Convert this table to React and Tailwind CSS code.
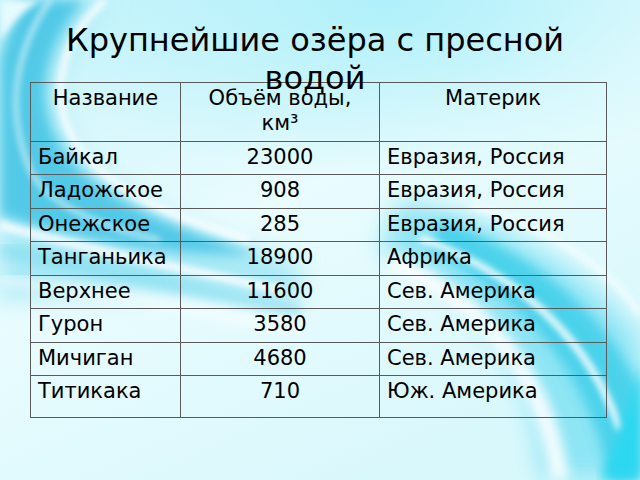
import React from "react";

const rows = [
  ["Байкал", "23000", "Евразия, Россия"],
  ["Ладожское", "908", "Евразия, Россия"],
  ["Онежское", "285", "Евразия, Россия"],
  ["Танганьика", "18900", "Африка"],
  ["Верхнее", "11600", "Сев. Америка"],
  ["Гурон", "3580", "Сев. Америка"],
  ["Мичиган", "4680", "Сев. Америка"],
  ["Титикака", "710", "Юж. Америка"],
];
const heights = ["h-[33px]", "h-[34px]", "h-[33px]", "h-[34px]", "h-[33px]", "h-[34px]", "h-[33px]", "h-[41px]"];

function Background() {
  return (
    <svg className="absolute inset-0" width="640" height="480" viewBox="0 0 640 480">
      <defs>
        <linearGradient id="base" x1="0" y1="0" x2="0.6" y2="1">
          <stop offset="0" stopColor="#c6f3fb" />
          <stop offset="0.5" stopColor="#e9fcfe" />
          <stop offset="1" stopColor="#d9f8fc" />
        </linearGradient>
        <radialGradient id="topglow" cx="0.6" cy="0" r="0.6">
          <stop offset="0" stopColor="#b0f0fa" />
          <stop offset="1" stopColor="#b0f0fa" stopOpacity="0" />
        </radialGradient>
        <filter id="b3"><feGaussianBlur stdDeviation="3" /></filter>
        <filter id="b6"><feGaussianBlur stdDeviation="6" /></filter>
        <filter id="b12"><feGaussianBlur stdDeviation="12" /></filter>
      </defs>
      <rect width="640" height="480" fill="url(#base)" />
      <rect width="640" height="300" fill="url(#topglow)" />
      {/* left swirl */}
      <path d="M0 0 L 110 0 C 50 50, 40 120, 90 165 C 140 210, 220 240, 300 265 L 300 300 C 200 290, 80 290, 0 300 Z" fill="#a8e9f6" filter="url(#b12)" />
      <path d="M20 0 L 85 0 C 40 50, 30 110, 70 160 C 110 205, 180 230, 260 255 C 170 255, 80 240, 0 215 L 0 60 Z" fill="#48c6e6" filter="url(#b6)" opacity="0.9" />
      <path d="M0 40 C 15 20, 25 10, 40 0 L 0 0 Z" fill="#e6fbfe" filter="url(#b3)" />
      <path d="M105 0 C 55 45, 45 110, 85 155 C 120 195, 180 220, 250 240" stroke="#ffffff" strokeWidth="7" fill="none" filter="url(#b3)" opacity="0.85" />
      <path d="M50 0 C 15 50, 5 110, 30 170 C 45 200, 90 225, 160 240" stroke="#ffffff" strokeWidth="5" fill="none" filter="url(#b3)" opacity="0.6" />
      <path d="M0 225 C 70 245, 160 265, 280 290" stroke="#ffffff" strokeWidth="9" fill="none" filter="url(#b3)" opacity="0.85" />
      <path d="M0 250 C 80 265, 170 285, 300 310" stroke="#7fdcf0" strokeWidth="12" fill="none" filter="url(#b6)" opacity="0.7" />
      <path d="M0 280 C 90 290, 180 305, 300 330" stroke="#ffffff" strokeWidth="10" fill="none" filter="url(#b6)" opacity="0.7" />
      {/* right swirl */}
      <path d="M400 200 C 510 220, 600 280, 640 340 L 640 480 L 540 480 C 540 390, 490 300, 380 250 Z" fill="#86e3f4" filter="url(#b12)" opacity="0.9" />
      <path d="M440 220 C 540 255, 610 320, 640 390 L 640 480 L 610 480 C 590 380, 530 300, 430 250 Z" fill="#3fcfea" filter="url(#b6)" opacity="0.85" />
      <path d="M420 238 C 520 275, 590 340, 620 430" stroke="#ffffff" strokeWidth="7" fill="none" filter="url(#b3)" opacity="0.9" />
      <path d="M390 262 C 480 300, 545 370, 560 480" stroke="#ffffff" strokeWidth="18" fill="none" filter="url(#b6)" opacity="0.9" />
      <path d="M470 205 C 560 230, 620 280, 640 315" stroke="#ffffff" strokeWidth="5" fill="none" filter="url(#b3)" opacity="0.8" />
      <path d="M640 360 C 630 400, 620 440, 600 480 L 640 480 Z" fill="#2ad8f0" filter="url(#b6)" />
    </svg>
  );
}

export default function App() {
  return (
    <div className="relative w-[640px] h-[480px] overflow-hidden" style={{ fontFamily: '"DejaVu Sans", sans-serif' }}>
      <Background />
      <div className="relative flex flex-col pt-[21px]">
        <div className="h-[61px] flex justify-center">
          <h1 className="w-[530px] ml-[-10px] text-center text-[32px] leading-[38px] font-normal text-black relative z-10">
            Крупнейшие озёра с пресной водой
          </h1>
        </div>
        <div className="ml-[30px] w-[577px] border border-[#5a5a5a] text-[21px] leading-[25px] text-black">
          <div className="grid grid-cols-[150px_199px_1fr] h-[59px] border-b border-[#5a5a5a]">
            <div className="border-r border-[#5a5a5a] text-center pt-[3px]">Название</div>
            <div className="border-r border-[#5a5a5a] text-center pt-[3px]">Объём воды,<br />км³</div>
            <div className="text-center pt-[3px]">Материк</div>
          </div>
          {rows.map((r, i) => (
            <div
              key={r[0]}
              className={`grid grid-cols-[150px_199px_1fr] ${heights[i]} ${i < rows.length - 1 ? "border-b border-[#5a5a5a]" : ""}`}
            >
              <div className="border-r border-[#5a5a5a] pl-[7px] pt-[3px]">{r[0]}</div>
              <div className="border-r border-[#5a5a5a] text-center pt-[3px]">{r[1]}</div>
              <div className="pl-[7px] pt-[3px]">{r[2]}</div>
            </div>
          ))}
        </div>
      </div>
    </div>
  );
}
